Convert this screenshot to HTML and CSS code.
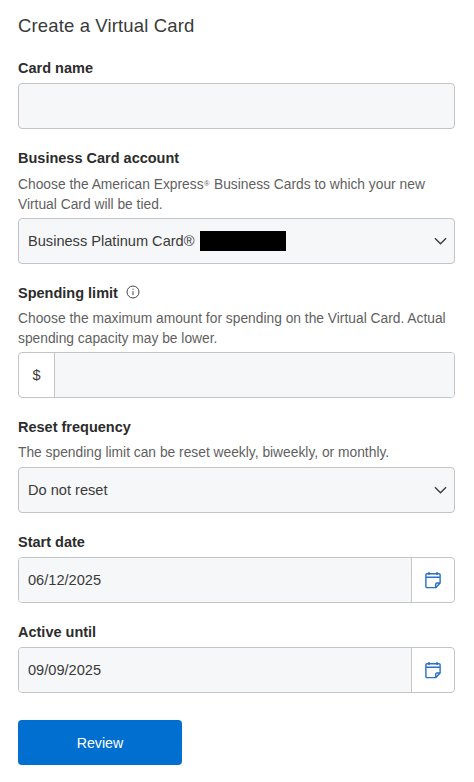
FILE: index.html
```html
<!DOCTYPE html>
<html lang="en">
<head>
<meta charset="utf-8">
<title>Create a Virtual Card</title>
<link rel="stylesheet" href="styles.css">
</head>
<body>
<main class="page">
  <h1 class="title">Create a Virtual Card</h1>

  <section class="field">
    <div class="label">Card name</div>
    <div class="box"></div>
  </section>

  <section class="field">
    <div class="label">Business Card account</div>
    <p class="help">Choose the American Express<sup class="reg">®</sup> Business Cards to which your new Virtual Card will be tied.</p>
    <div class="box select">
      <span class="value">Business Platinum Card®</span>
      <span class="redact"></span>
      <svg class="chevron" viewBox="0 0 14 8"><path d="M1 1l6 6 6-6"/></svg>
    </div>
  </section>

  <section class="field">
    <div class="label">Spending limit
      <svg class="info" viewBox="0 0 14 14"><circle cx="7" cy="7" r="6"/><path d="M7 6.2v3.9M7 3.6v1.2"/></svg>
    </div>
    <p class="help tight">Choose the maximum amount for spending on the Virtual Card. Actual spending capacity may be lower.</p>
    <div class="box group">
      <span class="prefix">$</span>
      <span class="fill"></span>
    </div>
  </section>

  <section class="field">
    <div class="label">Reset frequency</div>
    <p class="help tight single">The spending limit can be reset weekly, biweekly, or monthly.</p>
    <div class="box select">
      <span class="value">Do not reset</span>
      <svg class="chevron" viewBox="0 0 14 8"><path d="M1 1l6 6 6-6"/></svg>
    </div>
  </section>

  <section class="field">
    <div class="label">Start date</div>
    <div class="box group">
      <span class="fill value">06/12/2025</span>
      <span class="suffix">
        <svg class="cal" viewBox="0 0 18 20"><path d="M4.5 1v3.4M13.5 1v3.4M1 7h16M12 18.6H2.2A1.2 1.2 0 0 1 1 17.4V4.2A1.2 1.2 0 0 1 2.2 3h13.6A1.2 1.2 0 0 1 17 4.2v9.2zM17 13.4h-3.6a1.4 1.4 0 0 0-1.4 1.4v3.8"/></svg>
      </span>
    </div>
  </section>

  <section class="field">
    <div class="label">Active until</div>
    <div class="box group">
      <span class="fill value">09/09/2025</span>
      <span class="suffix">
        <svg class="cal" viewBox="0 0 18 20"><path d="M4.5 1v3.4M13.5 1v3.4M1 7h16M12 18.6H2.2A1.2 1.2 0 0 1 1 17.4V4.2A1.2 1.2 0 0 1 2.2 3h13.6A1.2 1.2 0 0 1 17 4.2v9.2zM17 13.4h-3.6a1.4 1.4 0 0 0-1.4 1.4v3.8"/></svg>
      </span>
    </div>
  </section>

  <button class="review" type="button">Review</button>
</main>
</body>
</html>
```

FILE: styles.css
```css
* { box-sizing: border-box; }
html, body { margin: 0; padding: 0; background: #fff; }
body {
  font-family: "Liberation Sans", Arial, sans-serif;
  color: #2c2c2c;
  width: 474px;
  height: 782px;
  overflow: hidden;
}
.page {
  display: flex;
  flex-direction: column;
  padding: 14px 19px 0 18px;
}
.title {
  margin: 0 0 20px;
  height: 24px;
  font-size: 18.5px;
  line-height: 24px;
  font-weight: 400;
  letter-spacing: 0.14px;
  color: #3a3a3a;
}
.field { display: flex; flex-direction: column; margin-bottom: 19px; }
.label {
  display: flex;
  align-items: center;
  height: 20px;
  margin-bottom: 5px;
  font-size: 14.5px;
  line-height: 20px;
  font-weight: 700;
  color: #2c2c2c;
}
.help {
  margin: 2px 0 3px;
  font-size: 13.8px;
  line-height: 20px;
  color: #5f5f5f;
}
.help.tight { margin-top: 1px; }
.help.single { margin-bottom: 4px; }
.reg { font-size: 7.5px; line-height: 0; vertical-align: 3px; margin: 0 0.5px; }
.box {
  display: flex;
  align-items: center;
  height: 46px;
  border: 1px solid #c4c4c4;
  border-radius: 4px;
  background: #f6f7f9;
  overflow: hidden;
}
.select { padding: 0 7px 0 9px; }
.value { font-size: 14.6px; color: #3a3a3a; }
.redact { width: 86px; height: 20px; margin-left: 5px; background: #000; }
.chevron {
  width: 13px;
  height: 8px;
  margin-left: auto;
  fill: none;
  stroke: #3c3c3c;
  stroke-width: 1.5;
}
.group { background: #fff; }
.prefix {
  flex: none;
  width: 36px;
  height: 100%;
  display: flex;
  align-items: center;
  justify-content: center;
  font-size: 14.6px;
  color: #3a3a3a;
  border-right: 1px solid #c4c4c4;
}
.fill {
  flex: 1;
  height: 100%;
  display: flex;
  align-items: center;
  background: #f6f7f9;
}
.fill.value { padding-left: 9px; }
.suffix {
  flex: none;
  width: 43px;
  height: 100%;
  display: flex;
  align-items: center;
  justify-content: center;
  border-left: 1px solid #c4c4c4;
}
.cal {
  width: 16px;
  height: 18px;
  fill: none;
  stroke: #2a70c4;
  stroke-width: 1.6;
  stroke-linejoin: round;
}
.info {
  width: 14px;
  height: 14px;
  margin-left: 8px;
  margin-top: -2px;
  fill: none;
  stroke: #444;
  stroke-width: 1;
}
.review {
  width: 164px;
  height: 45px;
  margin-top: 8px;
  border: 0;
  border-radius: 4px;
  background: #006fcf;
  color: #fff;
  font-family: inherit;
  font-size: 14.2px;
  padding: 0;
}
```
